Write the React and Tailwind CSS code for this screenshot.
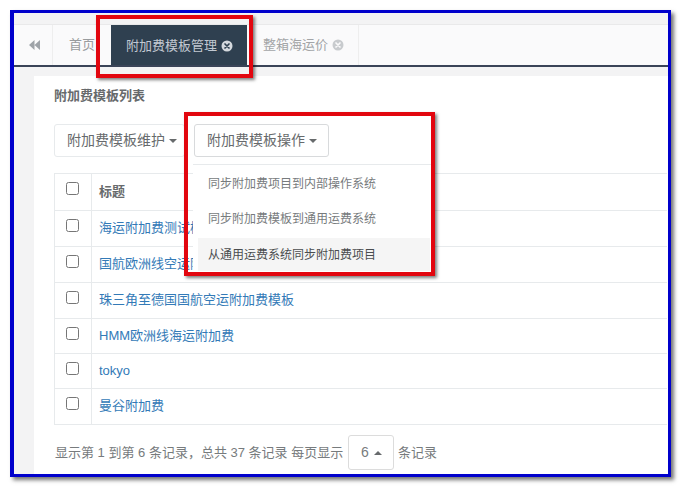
const rows = ["海运附加费测试模板", "国航欧洲线空运附加费", "珠三角至德国国航空运附加费模板", "HMM欧洲线海运附加费", "tokyo", "曼谷附加费"];
const rowH = [36, 36, 36, 35, 35, 36];

function Caret({ up = false }) {
  return up ? (
    <span className="inline-block w-0 h-0 border-x-[4px] border-x-transparent border-b-[4px] border-b-[#676a6c]" />
  ) : (
    <span className="inline-block w-0 h-0 border-x-[4px] border-x-transparent border-t-[4px] border-t-[#676a6c]" />
  );
}

function CloseIcon({ bg, fg }) {
  return (
    <svg width="12" height="12" viewBox="0 0 12 12" className="shrink-0">
      <circle cx="6" cy="6" r="5.5" fill={bg} />
      <path d="M4 4 L8 8 M8 4 L4 8" stroke={fg} strokeWidth="1.7" strokeLinecap="round" />
    </svg>
  );
}

export default function App() {
  return (
    <div className="relative w-[681px] h-[488px] bg-white overflow-hidden text-[#676a6c] font-['Liberation_Sans','Noto_Sans_CJK_SC',sans-serif] pt-[10px] pl-[10px]">
      <div className="w-[661px] h-[467px] border-y-[3px] border-r-[3px] border-l-[4px] border-[#0000cc] shadow-[3px_3px_4px_rgba(0,0,0,0.55)] flex flex-col overflow-hidden">
        <div className="h-[12px] shrink-0 bg-[#f3f3f4] border-b border-[#e9e9ea]" />
        <div className="h-[40px] shrink-0 bg-[#fafafb] flex text-[13px]">
          <div className="w-[39px] pl-[3px] flex items-center justify-center border-r border-[#eeeeee]">
            <svg width="11" height="10" viewBox="0 0 11 10">
              <path d="M5.5 0 L5.5 10 L0 5 Z M11 0 L11 10 L5.5 5 Z" fill="#9ea3a8" />
            </svg>
          </div>
          <div className="w-[58px] pl-[16px] flex items-center text-[#999c9e]">首页</div>
          <div className="w-[136px] h-[41px] bg-[#2f4050] text-[#c2c9d2] flex items-center pl-[15px] gap-[4px]">
            附加费模板管理
            <CloseIcon bg="#d5d9de" fg="#2f4050" />
          </div>
          <div className="w-[112px] pl-[16px] flex items-center gap-[4px] text-[#a3a5a7] border-r border-[#eeeeee]">
            整箱海运价
            <CloseIcon bg="#c8cbce" fg="#fafafb" />
          </div>
        </div>
        <div className="h-[2px] shrink-0 bg-[#3a4458]" />
        <div className="flex-1 min-h-0 bg-[#f3f3f4] pt-[9px] pl-[20px] flex flex-col">
          <div className="flex-1 bg-white pl-[20px] pr-[1px]">
            <div className="h-[38px] pt-[10px] text-[13px] font-bold leading-[20px]">附加费模板列表</div>
            <div className="mt-[10px] flex gap-[9px] text-[14px] h-[33px]">
              <div className="w-[131px] border border-[#e7eaec] rounded-[3px] flex items-center pl-[12px] gap-[4px]">
                附加费模板维护 <Caret />
              </div>
              <div className="w-[135px] border border-[#d8dadc] rounded-[3px] flex items-center pl-[12px] gap-[4px]">
                附加费模板操作 <Caret />
              </div>
            </div>
            <table className="mt-[16px] w-full border-collapse border-y border-l border-[#e7eaec] text-[13px]">
              <tbody>
                <tr className="h-[37px] border-b border-[#e7eaec]">
                  <td className="w-[37px] border-r border-[#e7eaec] pl-[11px] align-top pt-[8px]">
                    <input type="checkbox" className="m-0 block" />
                  </td>
                  <td className="pl-[7px] pb-[1px] font-bold text-[#676a6c]">标题</td>
                </tr>
                {rows.map((r, i) => (
                  <tr key={r} style={{ height: rowH[i] }} className="border-b border-[#e7eaec]">
                    <td className="border-r border-[#e7eaec] pl-[11px] align-top pt-[8px]">
                      <input type="checkbox" className="m-0 block" />
                    </td>
                    <td className="pl-[7px] pb-[1px] text-[#337ab7]">{r}</td>
                  </tr>
                ))}
              </tbody>
            </table>
            <div className="mt-[10px] h-[35px] flex items-center text-[13px] text-[#777b7d]">
              <span className="ml-[1px] w-[293px] whitespace-pre">显示第 1 到第 6 条记录，总共 37 条记录 每页显示</span>
              <div className="w-[46px] h-[35px] border border-[#dcdcdc] rounded-[3px] flex items-center pl-[12px] gap-[5px] text-[14px]">
                6 <Caret up />
              </div>
              <span className="ml-[4px]">条记录</span>
            </div>
          </div>
        </div>
      </div>

      {/* open dropdown menu */}
      <div className="absolute left-[193px] top-[164px] w-[240px] h-[108px] bg-white border-t border-[#e7eaec] pl-[5px] pr-[3px] pt-[2px] text-[12px] text-[#777b7d]">
        <div className="h-[34px] pl-[10px] flex items-center">同步附加费项目到内部操作系统</div>
        <div className="h-[35px] pl-[10px] flex items-center">同步附加费模板到通用运费系统</div>
        <div className="mt-[2px] h-[33px] pl-[10px] flex items-center bg-[#f5f5f5] text-[#4a4d4f]">从通用运费系统同步附加费项目</div>
      </div>

      {/* annotation boxes */}
      <div className="absolute left-[96px] top-[15px] w-[157px] h-[63px] border-[4px] border-[#e2060f] shadow-[2px_2px_3px_rgba(0,0,0,0.5)]" />
      <div className="absolute left-[184px] top-[112px] w-[251px] h-[164px] border-[4px] border-[#e2060f] shadow-[2px_2px_3px_rgba(0,0,0,0.5)]" />
    </div>
  );
}
